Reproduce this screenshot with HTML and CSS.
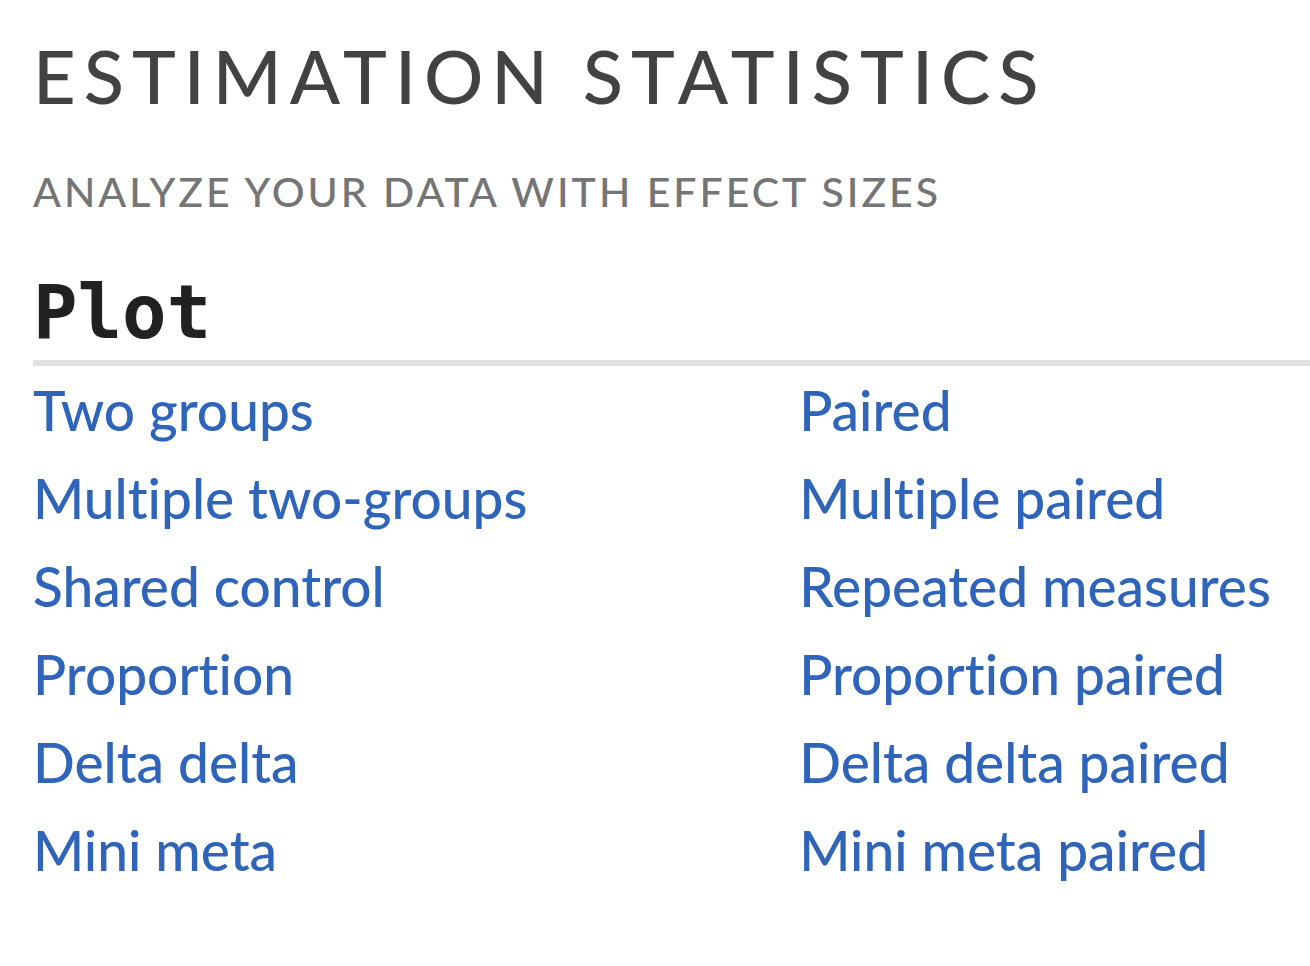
FILE: index.html
```html
<!DOCTYPE html>
<html lang="en">
<head>
<meta charset="utf-8">
<meta name="viewport" content="width=device-width, initial-scale=1">
<title>Estimation Statistics</title>
<link rel="stylesheet" href="styles.css">
</head>
<body>
<header class="masthead">
<h1 class="title">ESTIMATION STATISTICS</h1>
<p class="tagline">ANALYZE YOUR DATA WITH EFFECT SIZES</p>
</header>
<main class="plot">
<h2 class="section-title">Plot</h2>
<nav class="links" aria-label="Plot">
<a href="#two-groups">Two groups</a>
<a href="#paired">Paired</a>
<a href="#multiple-two-groups">Multiple two-groups</a>
<a href="#multiple-paired">Multiple paired</a>
<a href="#shared-control">Shared control</a>
<a href="#repeated-measures">Repeated measures</a>
<a href="#proportion">Proportion</a>
<a href="#proportion-paired">Proportion paired</a>
<a href="#delta-delta">Delta delta</a>
<a href="#delta-delta-paired">Delta delta paired</a>
<a href="#mini-meta">Mini meta</a>
<a href="#mini-meta-paired">Mini meta paired</a>
</nav>
</main>
</body>
</html>
```
FILE: styles.css
```css
body {
  margin: 0;
  padding: 32px 0 64px 33px;
  background: #fff;
  font-family: Lato, "Open Sans", sans-serif;
  font-variant-ligatures: none;
}

.title {
  margin: 0;
  color: #424242;
  font-size: 74px;
  font-weight: 500;
  line-height: 88px;
  letter-spacing: 8px;
  white-space: nowrap;
}

.tagline {
  margin: 42px 0 0;
  color: #757575;
  font-size: 41px;
  font-weight: 500;
  line-height: 60px;
  letter-spacing: 3px;
  white-space: nowrap;
}

.section-title {
  margin: 50px 0 0;
  padding-bottom: 8px;
  border-bottom: 6px solid #e0e0e0;
  color: #212121;
  font-family: "DejaVu Sans Mono", monospace;
  font-size: 74px;
  font-weight: 700;
  line-height: 80px;
}

.links {
  display: grid;
  grid-template-columns: 3fr 2fr;
}

.links a {
  color: #2f64bb;
  font-size: 55px;
  font-weight: 500;
  line-height: 88px;
  text-decoration: none;
  white-space: nowrap;
}
```
